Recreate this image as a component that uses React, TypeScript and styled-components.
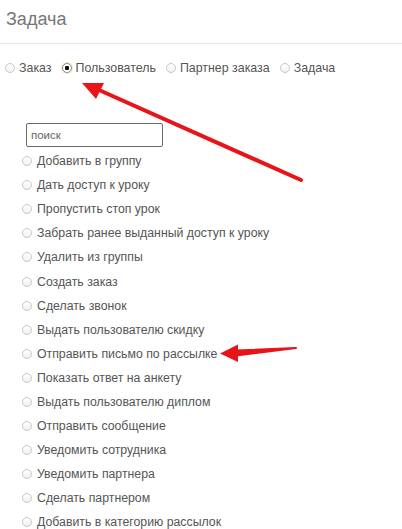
import styled, { createGlobalStyle } from 'styled-components'

const GlobalStyle = createGlobalStyle`
  body {
    margin: 0;
    background: #fff;
    font-family: "Liberation Sans", Arial, sans-serif;
    color: #333;
  }
`

const Page = styled.div`
  position: relative;
  width: 402px;
  height: 529px;
  overflow: hidden;
`

const Header = styled.header`
  height: 43px;
  padding: 0 6px;
  border-bottom: 1px solid #e6e6e6;
  display: flex;
  align-items: center;
`

const Title = styled.h1`
  margin: 0 0 4px;
  font-size: 18px;
  font-weight: 400;
  color: #777;
`

const TypeRow = styled.div`
  display: flex;
  align-items: center;
  height: 20px;
  margin-top: 14px;
  padding-left: 5px;
  font-size: 12.4px;
`

const Option = styled.label`
  display: flex;
  align-items: center;
  gap: 4px;
  margin-right: 10px;
  color: #555;
`

const Radio = styled.span<{ checked?: boolean }>`
  box-sizing: border-box;
  width: 10px;
  height: 10px;
  border-radius: 50%;
  border: 1px solid ${(p) => (p.checked ? '#8a8a8a' : '#c8c8c8')};
  background: ${(p) =>
    p.checked
      ? 'radial-gradient(circle, #111 0 2px, #fff 2.5px)'
      : 'linear-gradient(#fff, #f1f1f1)'};
  box-shadow: ${(p) => (p.checked ? '0 0 0 1px #f3e6c4' : 'none')};
  flex-shrink: 0;
`

const Panel = styled.section`
  padding-left: 26px;
  margin-top: 45px;
`

const Search = styled.input`
  box-sizing: border-box;
  width: 137px;
  height: 24px;
  border: 1px solid #6b6b6b;
  border-radius: 2px;
  padding: 0 4px;
  font-family: "Liberation Sans", Arial, sans-serif;
  font-size: 11.5px;
  outline: none;
  &::placeholder {
    color: #666;
  }
`

const List = styled.ul`
  list-style: none;
  margin: 2px 0 0 -4px;
  padding: 0;
`

const Item = styled.li`
  display: flex;
  align-items: center;
  gap: 5px;
  height: 24.1px;
  font-size: 12.3px;
  color: #555;
`

const Overlay = styled.svg`
  position: absolute;
  left: 0;
  top: 0;
  pointer-events: none;
`

const types = [
  { label: 'Заказ', checked: false },
  { label: 'Пользователь', checked: true },
  { label: 'Партнер заказа', checked: false },
  { label: 'Задача', checked: false },
]

const actions = [
  'Добавить в группу',
  'Дать доступ к уроку',
  'Пропустить стоп урок',
  'Забрать ранее выданный доступ к уроку',
  'Удалить из группы',
  'Создать заказ',
  'Сделать звонок',
  'Выдать пользователю скидку',
  'Отправить письмо по рассылке',
  'Показать ответ на анкету',
  'Выдать пользователю диплом',
  'Отправить сообщение',
  'Уведомить сотрудника',
  'Уведомить партнера',
  'Сделать партнером',
  'Добавить в категорию рассылок',
]

export default function App() {
  return (
    <Page>
      <GlobalStyle />
      <Header>
        <Title>Задача</Title>
      </Header>
      <TypeRow>
        {types.map((t) => (
          <Option key={t.label}>
            <Radio checked={t.checked} />
            {t.label}
          </Option>
        ))}
      </TypeRow>
      <Panel>
        <Search placeholder="поиск" />
        <List>
          {actions.map((a) => (
            <Item key={a}>
              <Radio />
              {a}
            </Item>
          ))}
        </List>
      </Panel>
      <Overlay width="402" height="529" viewBox="0 0 402 529">
        <line x1="301" y1="180" x2="99" y2="90" stroke="#e8141a" strokeWidth="4" strokeLinecap="round" />
        <polygon points="82,83 104,83 96,99" fill="#e8141a" />
        <path d="M296 348 L236 350.5 L236 355.5 Z" fill="#e8141a" stroke="#e8141a" strokeWidth="2" strokeLinejoin="round" />
        <polygon points="220,353.5 238,344.5 238,362" fill="#e8141a" />
      </Overlay>
    </Page>
  )
}
